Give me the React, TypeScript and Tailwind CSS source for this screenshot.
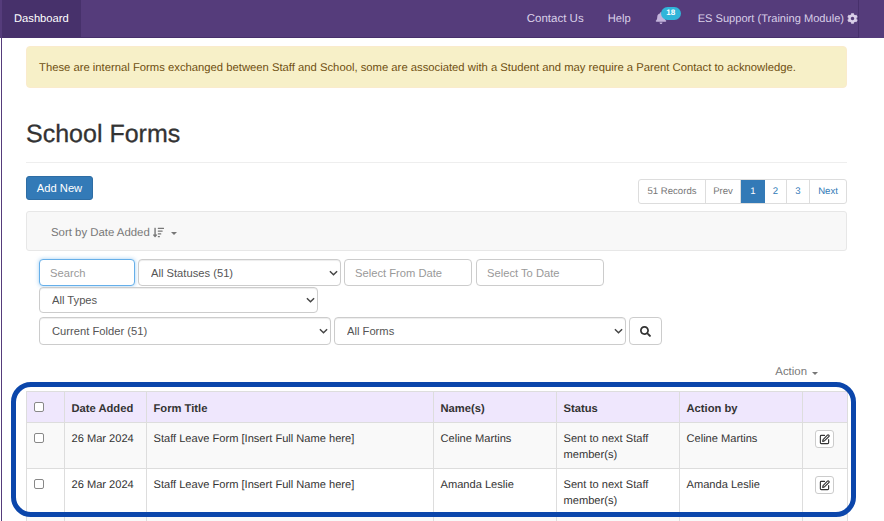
import { FaBell, FaCog, FaSearch, FaSortAmountDown } from 'react-icons/fa'
import { SquarePen } from 'lucide-react'

const rows = [
  { name: 'Celine Martins', tint: 'bg-[#f9f9f9]' },
  { name: 'Amanda Leslie', tint: 'bg-white' },
]

function Select({ label, width }: { label: string; width: string }) {
  return (
    <div className={`relative h-full ${width}`}>
      <select className="h-full w-full appearance-none rounded-[4px] border border-[#ccc] bg-white pl-[12px] text-[11.2px] text-[#555] shadow-[inset_0_1px_1px_rgba(0,0,0,0.075)]">
        <option>{label}</option>
      </select>
      <svg viewBox="0 0 10 6" className="pointer-events-none absolute right-[3px] top-1/2 h-[6px] w-[9px] -translate-y-1/2 text-[#444]">
        <path d="M1 1l4 4 4-4" fill="none" stroke="currentColor" strokeWidth="1.6" />
      </svg>
    </div>
  )
}

function DateInput({ placeholder, width }: { placeholder: string; width: string }) {
  return (
    <input
      placeholder={placeholder}
      className={`h-full rounded-[4px] border border-[#ccc] bg-white px-[10px] text-[11.2px] placeholder:text-[#999] ${width}`}
    />
  )
}

export default function App() {
  return (
    <div className="relative h-[521px] w-[884px] overflow-hidden bg-white font-['Liberation_Sans',Arial,sans-serif] text-[11.2px] leading-[16px] text-[#333] [text-rendering:geometricPrecision]">
      <nav className="flex h-[38px] w-full bg-[#553c7b] pl-[2px]">
        <a className="flex h-full w-[79px] shrink-0 items-center border-b border-[#47306b] bg-[#47316b] pl-[12px] text-white">Dashboard</a>
        <div className="flex h-full flex-1 items-center justify-end border-b border-r border-[#47306b] text-[#d9cfe8]">
          <a className="text-[11.5px]">Contact Us</a>
          <a className="ml-[24px]">Help</a>
          <span className="relative ml-[24px] h-[16px] w-[43px]">
            <FaBell className="absolute left-0 top-[1px] h-[12px] w-[12px] text-[#c4b4dc]" />
            <span className="absolute left-[6px] top-[-4px] flex h-[13px] w-[20px] items-center justify-center rounded-full bg-[#31b5d9] text-[8px] font-bold leading-none text-white">18</span>
          </span>
          <a className="text-[11.1px]">ES Support (Training Module)</a>
          <FaCog className="ml-[3px] h-[11px] w-[11px] text-[#d9cfe8]" />
        </div>
        <div className="w-[25px] shrink-0" />
      </nav>

      <div className="ml-[1px] h-full border-l border-[#553c7b] pl-[24px]">
        <main className="w-[821px]">
          <div className="pt-[8px]">
            <div className="flex h-[42px] items-center rounded-[4px] border border-[#faebcc] bg-[#f7f0c8] pl-[12px] pt-[1px] text-[11.27px] text-[#6f4f10]">
              These are internal Forms exchanged between Staff and School, some are associated with a Student and may require a Parent Contact to acknowledge.
            </div>
          </div>

          <h1 className="mt-[33px] border-b border-[#eee] pb-[14px] text-[25px] font-normal leading-[27px] text-[#333] [-webkit-text-stroke:0.3px_#333]">School Forms</h1>

          <div className="mt-[13px] flex items-start justify-between">
            <button className="h-[24px] w-[67px] rounded-[3px] border border-[#2e6da4] bg-[#337ab7] text-[11.2px] text-white">Add New</button>
            <div className="mt-[3px] flex h-[25px] rounded-[3px] border border-[#ddd] text-[9.6px] leading-none">
              <span className="flex w-[67px] items-center justify-center border-r border-[#ddd] text-[#777]">51 Records</span>
              <span className="flex w-[35px] items-center justify-center border-r border-[#ddd] text-[#777]">Prev</span>
              <span className="flex w-[24px] items-center justify-center bg-[#337ab7] text-white">1</span>
              <span className="flex w-[22px] items-center justify-center border-r border-[#ddd] text-[#337ab7]">2</span>
              <span className="flex w-[23px] items-center justify-center border-r border-[#ddd] text-[#337ab7]">3</span>
              <span className="flex w-[36px] items-center justify-center text-[#337ab7]">Next</span>
            </div>
          </div>

          <div className="mt-[7px] flex h-[40px] items-center rounded-[3px] border border-[#e7e7e7] bg-[#f8f8f8] pl-[24px] pt-[3px] text-[11.4px] text-[#777]">
            Sort by Date Added
            <FaSortAmountDown className="ml-[3px] h-[11px] w-[11px] text-[#777]" />
            <span className="ml-[7px] mt-[2px] h-0 w-0 border-x-[3px] border-t-[3px] border-x-transparent border-t-[#777]" />
          </div>

          <div className="ml-[13px] mt-[8px] flex flex-col">
            <div className="flex h-[27px] gap-[3px]">
              <input
                placeholder="Search"
                className="h-full w-[96px] rounded-[4px] border border-[#66afe9] bg-white px-[10px] text-[11.2px] shadow-[0_0_4px_rgba(102,175,233,0.6)] outline-none placeholder:text-[#999]"
              />
              <Select label="All Statuses (51)" width="w-[203px]" />
              <DateInput placeholder="Select From Date" width="w-[128px]" />
              <DateInput placeholder="Select To Date" width="ml-[1px] w-[128px]" />
            </div>
            <div className="mt-[1px] h-[26px]">
              <Select label="All Types" width="w-[279px]" />
            </div>
            <div className="mt-[4px] flex h-[28px] gap-[3px]">
              <Select label="Current Folder (51)" width="w-[292px]" />
              <Select label="All Forms" width="w-[292px]" />
              <button className="flex w-[33px] items-center justify-center rounded-[4px] border border-[#ccc] bg-white">
                <FaSearch className="h-[11px] w-[11px] text-[#333]" />
              </button>
            </div>
          </div>

          <div className="mt-[19px] flex h-[16px] items-center justify-end pr-[29px] text-[11.4px] text-[#777]">
            Action
            <span className="ml-[5px] mt-[2px] h-0 w-0 border-x-[3px] border-t-[3px] border-x-transparent border-t-[#777]" />
          </div>

          <table className="mt-[11px] w-[821px] table-fixed border-collapse text-[11.1px]">
            <colgroup>
              <col className="w-[38px]" />
              <col className="w-[82px]" />
              <col className="w-[287px]" />
              <col className="w-[123px]" />
              <col className="w-[123px]" />
              <col className="w-[123px]" />
              <col className="w-[45px]" />
            </colgroup>
            <thead>
              <tr className="h-[31px] bg-[#efe7fd] text-left text-[11.2px]">
                <th className="border border-[#ddd] pl-[6.5px] align-middle"><input type="checkbox" className="block h-[10px] w-[10px] appearance-none rounded-[2px] border border-[#888] bg-white" /></th>
                <th className="border border-[#ddd] pl-[6.5px] pt-[3px] font-bold">Date Added</th>
                <th className="border border-[#ddd] pl-[6.5px] pt-[3px] font-bold">Form Title</th>
                <th className="border border-[#ddd] pl-[6.5px] pt-[3px] font-bold">Name(s)</th>
                <th className="border border-[#ddd] pl-[6.5px] pt-[3px] font-bold">Status</th>
                <th className="border border-[#ddd] pl-[6.5px] pt-[3px] font-bold">Action by</th>
                <th className="border border-[#ddd]" />
              </tr>
            </thead>
            <tbody>
              {rows.map((row) => (
                <tr key={row.name} className={`h-[46px] ${row.tint}`}>
                  <td className="border border-[#ddd] pl-[6.5px] pt-[7px] align-top"><input type="checkbox" className="mt-[3px] block h-[10px] w-[10px] appearance-none rounded-[2px] border border-[#888] bg-white" /></td>
                  <td className="border border-[#ddd] px-[6.5px] pt-[8px] align-top">26 Mar 2024</td>
                  <td className="border border-[#ddd] px-[6.5px] pt-[8px] align-top">Staff Leave Form [Insert Full Name here]</td>
                  <td className="border border-[#ddd] px-[6.5px] pt-[8px] align-top">{row.name}</td>
                  <td className="border border-[#ddd] px-[6.5px] pt-[8px] align-top">Sent to next Staff member(s)</td>
                  <td className="border border-[#ddd] px-[6.5px] pt-[8px] align-top">{row.name}</td>
                  <td className="border border-[#ddd] pt-[7px] align-top">
                    <button className="ml-[12px] flex h-[18px] w-[19px] items-center justify-center rounded-[3px] border border-[#ccc] bg-white">
                      <SquarePen className="h-[11px] w-[11px] text-[#333]" strokeWidth={2.5} />
                    </button>
                  </td>
                </tr>
              ))}
              <tr className="h-[46px] bg-[#f9f9f9]">
                {[0, 1, 2, 3, 4, 5, 6].map((i) => (
                  <td key={i} className="border border-[#ddd]" />
                ))}
              </tr>
            </tbody>
          </table>
        </main>
      </div>

      {/* annotation drawn over the table */}
      <div className="absolute left-[11px] top-[382px] h-[135px] w-[845px] rounded-[20px] border-[5px] border-[#0b46ab]" />
    </div>
  )
}
